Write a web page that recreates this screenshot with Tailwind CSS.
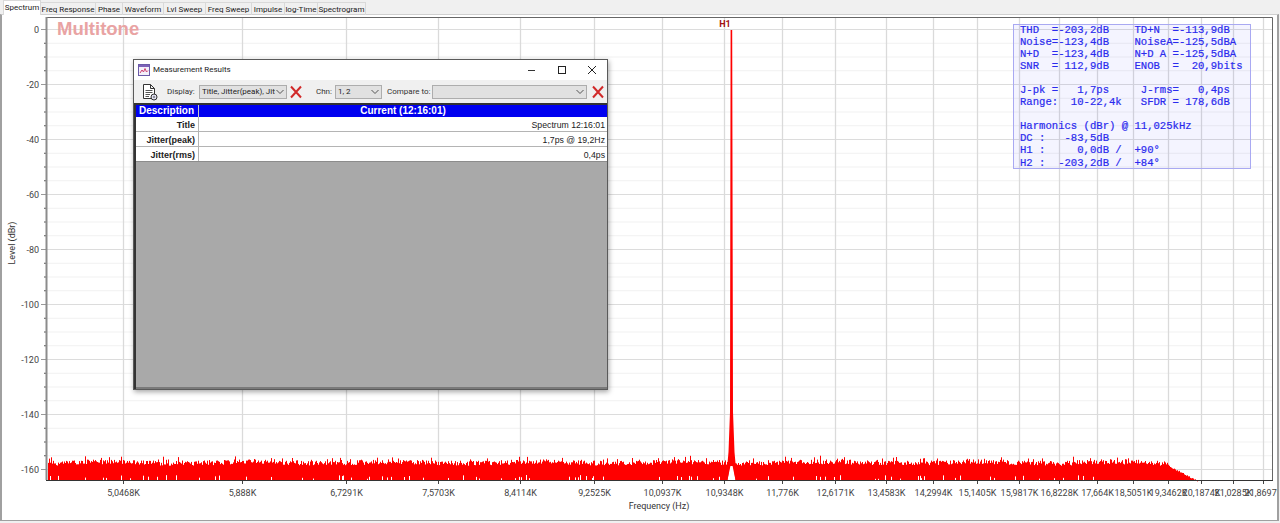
<!DOCTYPE html>
<html lang="en">
<head>
    <meta charset="UTF-8">
    <title>Multitone - Spectrum</title>
    <script src="https://cdn.jsdelivr.net/npm/@tailwindcss/browser@4"></script>
</head>
<body class="bg-[#f0f0f0]">
    <div class="relative w-[1280px] h-[523px] overflow-hidden flex flex-col font-['Roboto',sans-serif] text-[#222]">
        <!-- Tabs -->
        <div class="h-[14px] flex pl-[3px] text-[8px] leading-[13px] text-[#222] shrink-0 relative z-10 whitespace-nowrap">
            <div class="w-[38px] h-[15px] bg-white border-x border-t border-[#d9d9d9] text-center">Spectrum</div>
            <div class="w-[55px] h-[13px] mt-[2px] border-r border-t border-[#d9d9d9] text-center">Freq Response</div>
            <div class="w-[27px] h-[13px] mt-[2px] border-r border-t border-[#d9d9d9] text-center">Phase</div>
            <div class="w-[41px] h-[13px] mt-[2px] border-r border-t border-[#d9d9d9] text-center">Waveform</div>
            <div class="w-[42px] h-[13px] mt-[2px] border-r border-t border-[#d9d9d9] text-center">Lvl Sweep</div>
            <div class="w-[46px] h-[13px] mt-[2px] border-r border-t border-[#d9d9d9] text-center">Freq Sweep</div>
            <div class="w-[33px] h-[13px] mt-[2px] border-r border-t border-[#d9d9d9] text-center">Impulse</div>
            <div class="w-[33px] h-[13px] mt-[2px] border-r border-t border-[#d9d9d9] text-center">log-Time</div>
            <div class="w-[48px] h-[13px] mt-[2px] border-r border-t border-[#d9d9d9] text-center">Spectrogram</div>
        </div>

        <!-- Chart panel -->
        <div class="h-[507px] w-[1279px] bg-white border-x-2 border-y border-x-[#a0a0a0] border-t-[#d0d0d0] border-b-[#a0a0a0] overflow-hidden">
            <svg id="chart" class="block ml-[-2px] mt-[-1px] w-[1280px] h-[508px]" viewBox="0 14 1280 508"></svg>
        </div>

        <!-- Watermark -->
        <div class="absolute left-[57px] top-[18px] text-[18.5px] leading-[21px] font-bold font-['Liberation_Sans',sans-serif] text-[#e9a3a3]">Multitone</div>

        <!-- Stats overlay -->
        <div class="absolute left-[1013px] top-[24px] w-[238px] h-[145px] pl-[6px] bg-[#2020ff]/5 border border-[#a9a9f2]">
            <pre class="-mt-[1.5px] font-['Liberation_Mono',monospace] text-[10.6px] leading-[12.1px] text-[#2a2aee] [-webkit-text-stroke:0.2px_#2a2aee]">THD  =-203,2dB    TD+N  =-113,9dB
Noise=-123,4dB    NoiseA=-125,5dBA
N+D  =-123,4dB    N+D A =-125,5dBA
SNR  = 112,9dB    ENOB  =  20,9bits

J-pk =   1,7ps     J-rms=   0,4ps
Range:  10-22,4k   SFDR = 178,6dB

Harmonics (dBr) @ 11,025kHz
DC :   -83,5dB
H1 :     0,0dB /  +90°
H2 :  -203,2dB /  +84°</pre>
        </div>

        <!-- Measurement Results dialog -->
        <div class="absolute left-[133px] top-[59px] w-[475px] h-[331px] flex flex-col bg-white border border-[#5a5a5a] shadow-[1px_2px_5px_rgba(0,0,0,0.35)]">
            <div class="h-[20px] flex items-center shrink-0 bg-white">
                <svg class="ml-[4px] w-[12px] h-[12px]" viewBox="0 0 12 12">
                    <rect x="0.5" y="0.5" width="11" height="11" fill="#f4f0fa" stroke="#6a5aa8"/>
                    <rect x="1" y="1" width="10" height="2" fill="#7d62b8"/>
                    <path d="M2 9 L4 6 L5.5 8 L7 4.5 L8.5 8 L10 6.5" fill="none" stroke="#d04070"/>
                </svg>
                <span class="ml-[3px] text-[8px]">Measurement Results</span>
                <div class="ml-auto flex items-center">
                    <svg class="w-[30px] h-[20px]" viewBox="0 0 30 20"><path d="M11 10.5 H18" stroke="#333"/></svg>
                    <svg class="w-[30px] h-[20px]" viewBox="0 0 30 20"><rect x="11.5" y="6.5" width="7" height="7" fill="none" stroke="#222"/></svg>
                    <svg class="w-[30px] h-[20px]" viewBox="0 0 30 20"><path d="M11 6 L19 14 M19 6 L11 14" stroke="#222"/></svg>
                </div>
            </div>
            <div class="h-[23px] flex items-center bg-[#f0f0f0] shrink-0 text-[8px] text-[#333] whitespace-nowrap">
                <svg class="ml-[8px] w-[16px] h-[18px]" viewBox="0 0 16 18">
                    <path d="M1.5 1.5 H8.5 L12.5 5.5 V15.5 H1.5 Z M8.5 1.5 V5.5 H12.5" fill="#fff" stroke="#333"/>
                    <path d="M3.5 7.5 H10.5 M3.5 9.5 H10.5 M3.5 11.5 H8 M3.5 13.5 H7" stroke="#555"/>
                    <circle cx="12" cy="14" r="3" fill="#dde" stroke="#333"/>
                    <circle cx="12" cy="14" r="0.8" fill="#333"/>
                </svg>
                <span class="ml-[9px] w-[32px]">Display:</span>
                <div class="w-[88px] h-[14px] flex items-center justify-between bg-[#e1e1e1] border border-[#adadad] px-[2px] overflow-hidden">
                    <span class="w-[73px] overflow-hidden text-[#222]">Title, Jitter(peak), Jitter(rms)</span>
                    <svg class="w-[8px] h-[6px] shrink-0" viewBox="0 0 8 6"><path d="M0.5 1 L4 4.5 L7.5 1" fill="none" stroke="#555"/></svg>
                </div>
                <svg class="ml-[2px] w-[14px] h-[14px]" viewBox="0 0 14 14"><path d="M2 1.5 L12 12.5 M12 1.5 L2 12.5" stroke="#d12a2a" stroke-width="2"/></svg>
                <span class="ml-[13px] w-[19px]">Chn:</span>
                <div class="w-[47px] h-[14px] flex items-center justify-between bg-[#e1e1e1] border border-[#adadad] px-[2px]">
                    <span class="text-[#222]">1, 2</span>
                    <svg class="w-[8px] h-[6px]" viewBox="0 0 8 6"><path d="M0.5 1 L4 4.5 L7.5 1" fill="none" stroke="#555"/></svg>
                </div>
                <span class="ml-[5px] w-[45px]">Compare to:</span>
                <div class="w-[155px] h-[14px] flex items-center justify-end bg-[#e1e1e1] border border-[#adadad] pr-[2px]">
                    <svg class="w-[8px] h-[6px]" viewBox="0 0 8 6"><path d="M0.5 1 L4 4.5 L7.5 1" fill="none" stroke="#555"/></svg>
                </div>
                <svg class="ml-[4px] w-[14px] h-[14px]" viewBox="0 0 14 14"><path d="M2 1.5 L12 12.5 M12 1.5 L2 12.5" stroke="#d12a2a" stroke-width="2"/></svg>
            </div>
            <!-- Results table -->
            <div class="flex-1 flex flex-col bg-[#a9a9a9] border-t-2 border-l-2 border-[#333] font-['Liberation_Sans',sans-serif] text-[8.7px] text-[#222]">
                <div class="h-[12px] flex bg-[#0000f0] text-white font-bold text-[10px] leading-[12px] shrink-0">
                    <div class="w-[63px] pl-[3px] border-r border-[#c8c8c8]">Description</div>
                    <div class="flex-1 text-center">Current (12:16:01)</div>
                </div>
                <div class="h-[15px] flex bg-white border-b border-[#b4b4b4] leading-[17px] shrink-0">
                    <div class="w-[63px] pr-[3px] text-right font-bold text-[9px] border-r border-[#b4b4b4]">Title</div>
                    <div class="flex-1 pr-[2px] text-right">Spectrum 12:16:01</div>
                </div>
                <div class="h-[15px] flex bg-white border-b border-[#b4b4b4] leading-[17px] shrink-0">
                    <div class="w-[63px] pr-[3px] text-right font-bold text-[9px] border-r border-[#b4b4b4]">Jitter(peak)</div>
                    <div class="flex-1 pr-[2px] text-right">1,7ps @ 19,2Hz</div>
                </div>
                <div class="h-[15px] flex bg-white border-b border-[#8c8c8c] leading-[16px] shrink-0">
                    <div class="w-[63px] pr-[3px] text-right font-bold text-[9px] border-r border-[#b4b4b4]">Jitter(rms)</div>
                    <div class="flex-1 pr-[2px] text-right">0,4ps</div>
                </div>
                <div class="flex-1"></div>
                <div class="h-[2px] bg-[#7a7a7a]"></div>
            </div>
        </div>
    </div>

    <script>
        const NS = 'http://www.w3.org/2000/svg';
        const chart = document.getElementById('chart');

        const LEFT = 47, RIGHT = 1272, TOP = 17, BOTTOM = 480;
        const yOf = db => 29.5 + db * -2.75;
        const xOf = khz => 122.5 + 778 * Math.log(khz / 5.0468);

        const xLabels = ['5,0468K', '5,888K', '6,7291K', '7,5703K', '8,4114K', '9,2525K', '10,0937K', '10,9348K',
            '11,776K', '12,6171K', '13,4583K', '14,2994K', '15,1405K', '15,9817K', '16,8228K', '17,664K',
            '18,5051K', '19,3462K', '20,1874K', '21,0285K', '21,8697K'];

        function add(tag, attrs, text) {
            const el = document.createElementNS(NS, tag);
            for (const k in attrs) el.setAttribute(k, attrs[k]);
            if (text) el.textContent = text;
            chart.appendChild(el);
            return el;
        }

        // Small seeded random so the noise floor is the same every run
        let seed = 12345;
        function rnd() {
            seed = (seed * 1664525 + 1013904223) >>> 0;
            return seed / 4294967296;
        }

        // Horizontal grid, every 5 dB, stronger at each 20 dB
        for (let db = 0; db >= -160; db -= 5) {
            const major = db % 20 === 0;
            add('path', { d: `M${LEFT} ${yOf(db)} H${RIGHT}`, stroke: major ? '#dcdcdc' : '#f1f1f1' });
            add('path', { d: `M${major ? 41 : 44} ${yOf(db)} H${LEFT}`, stroke: major ? '#999' : '#555' });
            if (major) {
                add('text', { x: 39, y: yOf(db) + 3, 'text-anchor': 'end', class: 'text-[9px] fill-[#444]' }, String(db));
            }
        }

        // Vertical grid and frequency labels
        xLabels.forEach(label => {
            const x = Math.round(xOf(parseFloat(label.replace(',', '.')))) + 0.5;
            add('path', { d: `M${x} ${TOP} V${BOTTOM}`, stroke: '#dadada', 'stroke-width': 1.3 });
            add('path', { d: `M${x} ${BOTTOM} V${BOTTOM + 4}`, stroke: '#444' });
            add('text', { x, y: 496, 'text-anchor': 'middle', class: 'text-[9px] fill-[#444]' }, label);
        });

        // Noise floor, one column per pixel
        let red = '', white = '';
        for (let x = LEFT + 1; x < 1198; x++) {
            let top = 465 - rnd() * 5 + Math.sin(x / 23) * 0.8;
            if (rnd() < 0.14) top -= rnd() * 5;
            if (x > 1168) top = Math.max(top, 465 + (x - 1168) * 0.52 + rnd() * 1.5);
            if (x > 1100 && x <= 1168) top += (x - 1100) * 0.012;
            red += `M${x + 0.5} ${BOTTOM}V${top.toFixed(1)}`;
            if (x < 1100 && rnd() < 0.08) white += `M${x + 0.5} ${BOTTOM}V${BOTTOM - 1 - rnd() * 4}`;
        }
        add('path', { d: red, stroke: '#ff0000' });
        add('path', { d: white, stroke: '#ffffff' });

        // Notch in the floor under the skirt of H1
        add('path', { d: 'M727.5 480 L730 464 L733 464 L735.5 480 Z', fill: '#fff' });

        // H1 peak
        add('path', { d: 'M726 480 L728.5 452 L730 412 L730.6 30 L732.2 30 L733 412 L734.5 452 L737 480 L735.5 480 L732.6 466 L730.4 466 L727.5 480 Z', fill: '#ff0000' });
        add('text', { x: 725, y: 27, 'text-anchor': 'middle', class: 'text-[9px] font-bold fill-[#a01010]' }, 'H1');

        // Plot frame
        add('path', { d: `M${LEFT} ${TOP}.5 H${RIGHT}.5 V${BOTTOM}`, fill: 'none', stroke: '#666' });
        add('path', { d: `M${LEFT - 0.5} ${TOP} V${BOTTOM}`, stroke: '#8c8c8c', 'stroke-width': 2 });
        add('path', { d: `M${LEFT - 1} ${BOTTOM}.5 H${RIGHT + 1}`, stroke: '#333' });

        // Axis titles
        add('text', { x: 659, y: 509, 'text-anchor': 'middle', class: 'text-[9px] fill-[#333]' }, 'Frequency (Hz)');
        add('text', { x: 0, y: 0, 'text-anchor': 'middle', transform: 'translate(15 243) rotate(-90)', class: 'text-[9px] fill-[#333]' }, 'Level (dBr)');
    </script>
</body>
</html>
